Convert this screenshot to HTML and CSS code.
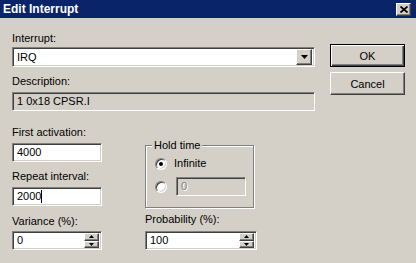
FILE: index.html
```html
<!DOCTYPE html>
<html lang="en">
<head>
<meta charset="utf-8">
<title>Edit Interrupt</title>
<link rel="stylesheet" href="styles.css">
</head>
<body>
<div class="window">
    <div class="titleBar">
        <span class="titleText">Edit Interrupt</span>
        <span class="closeButton raised">
            <svg width="8" height="7" viewBox="0 0 8 7"><path d="M0.5 0.5L7.5 6.5M7.5 0.5L0.5 6.5" stroke="#000" stroke-width="1.7"/></svg>
        </span>
    </div>
    <div class="dialogBody">
        <div class="mainColumn">
            <div class="fieldLabel">Interrupt:</div>
            <div class="comboBox sunken">
                <span class="fieldText">IRQ</span>
                <span class="dropButton raised">
                    <svg width="7" height="4" viewBox="0 0 7 4"><path d="M0 0h7L3.5 4z" fill="#000"/></svg>
                </span>
            </div>
            <div class="fieldLabel descLabel">Description:</div>
            <div class="readOnlyBox sunken"><span class="fieldText">1 0x18 CPSR.I</span></div>
            <div class="lowerArea">
                <div class="leftFields">
                    <div class="fieldLabel firstLabel">First activation:</div>
                    <div class="textBox sunken shortBox"><span class="fieldText">4000</span></div>
                    <div class="fieldLabel repeatLabel">Repeat interval:</div>
                    <div class="textBox sunken shortBox"><span class="fieldText">2000<span class="caret"></span></span></div>
                    <div class="fieldLabel varianceLabel">Variance (%):</div>
                    <div class="textBox sunken shortBox">
                        <span class="fieldText">0</span>
                        <span class="spinner">
                            <span class="spinButton raised"><svg width="5" height="3" viewBox="0 0 5 3"><path d="M0 3h5L2.5 0z" fill="#000"/></svg></span>
                            <span class="spinButton raised"><svg width="5" height="3" viewBox="0 0 5 3"><path d="M0 0h5L2.5 3z" fill="#000"/></svg></span>
                        </span>
                    </div>
                </div>
                <div class="rightFields">
                    <div class="groupBox">
                        <span class="groupTitle">Hold time</span>
                        <div class="radioRow">
                            <span class="radio checked"></span>
                            <span>Infinite</span>
                        </div>
                        <div class="radioRow secondRow">
                            <span class="radio"></span>
                            <div class="textBox sunken disabledBox"><span class="fieldText">0</span></div>
                        </div>
                    </div>
                    <div class="fieldLabel probLabel">Probability (%):</div>
                    <div class="textBox sunken wideBox">
                        <span class="fieldText">100</span>
                        <span class="spinner">
                            <span class="spinButton raised"><svg width="5" height="3" viewBox="0 0 5 3"><path d="M0 3h5L2.5 0z" fill="#000"/></svg></span>
                            <span class="spinButton raised"><svg width="5" height="3" viewBox="0 0 5 3"><path d="M0 0h5L2.5 3z" fill="#000"/></svg></span>
                        </span>
                    </div>
                </div>
            </div>
        </div>
        <div class="buttonColumn">
            <button type="button" class="pushButton defaultButton">OK</button>
            <button type="button" class="pushButton raised">Cancel</button>
        </div>
    </div>
</div>
</body>
</html>
```

FILE: styles.css
```css
body {
    margin: 0;
    background: #d4d0c8;
    font-family: "Liberation Sans", Arial, sans-serif;
    font-size: 11px;
    color: #000;
}
.window {
    width: 416px;
    height: 263px;
    overflow: hidden;
    background: #d4d0c8;
}
.titleBar {
    height: 18px;
    background: #0a246a;
    display: flex;
    justify-content: space-between;
    align-items: flex-start;
    padding: 0 5px 0 3px;
}
.titleText {
    color: #fff;
    font-weight: bold;
    font-size: 12px;
    line-height: 18px;
}
.closeButton {
    margin-top: 3px;
    width: 15px;
    height: 13px;
    display: flex;
    align-items: center;
    justify-content: center;
}
.sunken {
    box-sizing: border-box;
    border: 1px solid;
    border-color: #808080 #fff #fff #808080;
    box-shadow: inset 1px 1px 0 #404040, inset -1px -1px 0 #d4d0c8;
    background: #fff;
}
.raised {
    box-sizing: border-box;
    border: 1px solid;
    border-color: #fff #404040 #404040 #fff;
    box-shadow: inset -1px -1px 0 #808080;
    background: #d4d0c8;
}
.dialogBody {
    display: flex;
    gap: 15px;
    padding: 14px 0 0 12px;
}
.mainColumn {
    width: 303px;
    display: flex;
    flex-direction: column;
}
.fieldLabel {
    line-height: 13px;
    height: 13px;
    white-space: nowrap;
}
.fieldText {
    flex: 1;
    padding-left: 2px;
    line-height: 13px;
    display: flex;
    align-items: center;
}
.comboBox {
    margin-top: 2px;
    height: 20px;
    display: flex;
    align-items: center;
    padding: 2px;
}
.dropButton {
    width: 16px;
    height: 16px;
    display: flex;
    align-items: center;
    justify-content: center;
}
.descLabel {
    margin-top: 8px;
}
.readOnlyBox {
    margin-top: 4px;
    height: 19px;
    background: #d4d0c8;
    display: flex;
    align-items: center;
    padding: 2px;
}
.lowerArea {
    display: flex;
    gap: 43px;
}
.leftFields {
    width: 90px;
    display: flex;
    flex-direction: column;
}
.textBox {
    height: 19px;
    display: flex;
    align-items: center;
    padding: 2px;
}
.shortBox {
    width: 90px;
    margin-top: 4px;
}
.firstLabel {
    margin-top: 15px;
}
.repeatLabel {
    margin-top: 8px;
}
.varianceLabel {
    margin-top: 9px;
}
.leftFields .shortBox:last-child {
    margin-top: 3px;
}
.caret {
    display: inline-block;
    width: 1px;
    height: 13px;
    background: #000;
}
.spinner {
    width: 15px;
    height: 15px;
    display: flex;
    flex-direction: column;
}
.spinButton {
    flex: 1;
    display: flex;
    align-items: center;
    justify-content: center;
}
.rightFields {
    width: 112px;
    display: flex;
    flex-direction: column;
}
.groupBox {
    position: relative;
    box-sizing: border-box;
    margin-top: 34px;
    width: 109px;
    height: 63px;
    border: 1px solid #808080;
    box-shadow: inset 1px 1px 0 #fff, 1px 1px 0 #fff;
    padding: 11px 0 0 9px;
}
.groupTitle {
    position: absolute;
    top: -7px;
    left: 6px;
    padding: 0 2px;
    line-height: 13px;
    background: #d4d0c8;
}
.radioRow {
    display: flex;
    align-items: center;
    gap: 7px;
    height: 13px;
    line-height: 13px;
}
.secondRow {
    margin-top: 7px;
    height: 19px;
    gap: 9px;
}
.radio {
    box-sizing: border-box;
    width: 12px;
    height: 12px;
    border-radius: 50%;
    border: 1px solid;
    border-color: #808080 #fff #fff #808080;
    box-shadow: inset 1px 1px 0 #404040, inset -1px -1px 0 #d4d0c8;
    background: #fff;
    display: flex;
    align-items: center;
    justify-content: center;
}
.radio.checked::after {
    content: "";
    width: 4px;
    height: 4px;
    border-radius: 50%;
    background: #000;
}
.disabledBox {
    width: 70px;
    background: #d4d0c8;
    color: #808080;
    text-shadow: 1px 1px 0 #fff;
}
.probLabel {
    margin-top: 5px;
}
.wideBox {
    width: 112px;
    margin-top: 5px;
}
.buttonColumn {
    margin-top: 12px;
    display: flex;
    flex-direction: column;
    gap: 5px;
}
.pushButton {
    width: 75px;
    height: 23px;
    padding: 0;
    font-family: "Liberation Sans", Arial, sans-serif;
    font-size: 11px;
    color: #000;
}
.defaultButton {
    box-sizing: border-box;
    border: 1px solid #000;
    background: #d4d0c8;
    box-shadow: inset 1px 1px 0 #fff, inset -1px -1px 0 #404040, inset -2px -2px 0 #808080;
}
```
